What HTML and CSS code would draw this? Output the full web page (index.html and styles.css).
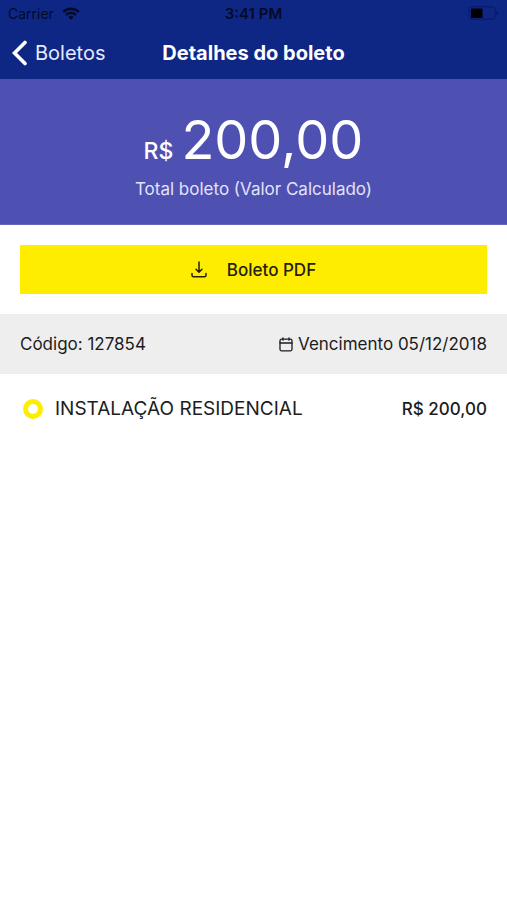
FILE: index.html
```html
<!DOCTYPE html>
<html lang="pt-BR">
<head>
<meta charset="utf-8">
<meta name="viewport" content="width=device-width, initial-scale=1">
<title>Detalhes do boleto</title>
<link rel="stylesheet" href="styles.css">
</head>
<body>
<header class="header">
  <div class="status">
    <div class="carrier">
      <span>Carrier</span>
      <svg width="18" height="13" viewBox="0 0 18 13" fill="none" stroke="currentColor" stroke-width="2.4">
        <path d="M1.2 5a11 11 0 0 1 15.6 0"/>
        <path d="M4 8a7 7 0 0 1 10 0"/>
        <path d="M9 12.8 6.3 10a3.8 3.8 0 0 1 5.4 0z" fill="currentColor" stroke="none"/>
      </svg>
    </div>
    <span class="time">3:41 PM</span>
    <svg class="battery" width="31" height="14" viewBox="0 0 31 14">
      <rect x="1" y=".8" width="26" height="12.4" rx="3" fill="none" stroke="#081a64"/>
      <rect x="3" y="2.5" width="11.5" height="9.5" rx=".5" fill="#000"/>
      <path d="M28.5 4.500q2 .7 2 2.500t-2 2.500z" fill="#081a64"/>
    </svg>
  </div>
  <nav class="nav">
    <a class="back" href="#">
      <svg width="16" height="26" viewBox="0 0 16 26" fill="none" stroke="currentColor" stroke-width="3.6" stroke-linecap="round"><path d="M13 2.500 2.500 13 13 23.500"/></svg>
      <span>Boletos</span>
    </a>
    <h1 class="title">Detalhes do boleto</h1>
  </nav>
</header>
<main>
  <section class="summary">
    <p class="amount"><span class="currency">R$</span><span>200,00</span></p>
    <p class="caption">Total boleto (Valor Calculado)</p>
  </section>
  <div class="actions">
    <button class="download" type="button">
      <svg width="16" height="17" viewBox="0 0 16 17" fill="none" stroke="currentColor" stroke-width="1.5" stroke-linecap="round" stroke-linejoin="round"><path d="M8 1v10M5 8.200l3 3 3-3M1 12.500v1.700q0 1.500 1.500 1.500h11q1.500 0 1.500-1.500v-1.700"/></svg>
      <span>Boleto PDF</span>
    </button>
  </div>
  <div class="meta">
    <span>Código: 127854</span>
    <span class="due">
      <svg width="14" height="15" viewBox="0 0 14 15" fill="none" stroke="currentColor" stroke-width="1.3" stroke-linecap="round"><rect x="1" y="2.2" width="12" height="11.6" rx="1.5"/><path d="M1 6h12M4 .8v2.400M10 .8v2.400"/></svg>
      <span>Vencimento 05/12/2018</span>
    </span>
  </div>
  <ul class="items">
    <li class="item"><span class="ring"></span><span class="name">INSTALAÇÃO RESIDENCIAL</span><span class="price">R$ 200,00</span></li>
  </ul>
</main>
</body>
</html>
```
FILE: styles.css
```css
* {
  box-sizing: border-box;
}

body,
h1,
p,
ul {
  margin: 0;
  padding: 0;
}

body {
  background: #fff;
  color: #1c1c1c;
  font-family: Inter, Roboto, sans-serif;
  font-size: 17px;
}

svg {
  display: block;
  flex: none;
}

.header {
  background: #0e2785;
}

.status,
.nav {
  display: grid;
  grid-template-columns: 1fr auto 1fr;
  align-items: center;
}

.status {
  height: 26px;
  padding: 0 8px;
  color: #040a26;
  font-size: 14px;
}

.carrier {
  display: flex;
  align-items: center;
  gap: 8px;
}

.time {
  font-size: 15px;
  font-weight: 600;
}

.battery {
  justify-self: end;
}

.nav {
  height: 53px;
  padding: 0 12px;
  color: #fff;
}

.back {
  display: flex;
  align-items: center;
  gap: 7px;
  color: #e6eaff;
  font-size: 20px;
  text-decoration: none;
}

.back svg {
  color: #fff;
}

.title {
  font-size: 20px;
  font-weight: 700;
}

.summary {
  padding: 29px 20px 22px;
  border-bottom: 1px solid #6867bb;
  background: #4e50b2;
  color: #fff;
  text-align: center;
}

.amount {
  display: flex;
  justify-content: center;
  align-items: baseline;
  gap: 8px;
  font-size: 54px;
  line-height: 64px;
}

.currency {
  font-size: 23px;
  font-weight: 500;
  line-height: 24px;
}

.caption {
  margin-top: 4px;
  color: #e2e3fa;
  font-size: 17px;
  line-height: 26px;
}

.actions {
  padding: 20px;
}

.download {
  display: flex;
  justify-content: center;
  align-items: center;
  gap: 20px;
  width: 100%;
  height: 49px;
  padding: 0;
  border: 0;
  background: #ffed00;
  color: #24210a;
  font: inherit;
  font-weight: 500;
}

.meta {
  display: flex;
  justify-content: space-between;
  align-items: center;
  height: 60px;
  padding: 0 20px;
  background: #eee;
}

.due {
  display: flex;
  align-items: center;
  gap: 5px;
}

.items {
  list-style: none;
}

.item {
  display: flex;
  align-items: center;
  height: 69px;
  padding: 0 20px 0 23px;
}

.ring {
  width: 20px;
  height: 20px;
  margin-right: 12px;
  border: 5px solid #ffed00;
  border-radius: 50%;
}

.name {
  flex: 1;
  font-size: 19px;
}

.price {
  font-weight: 500;
}
```
